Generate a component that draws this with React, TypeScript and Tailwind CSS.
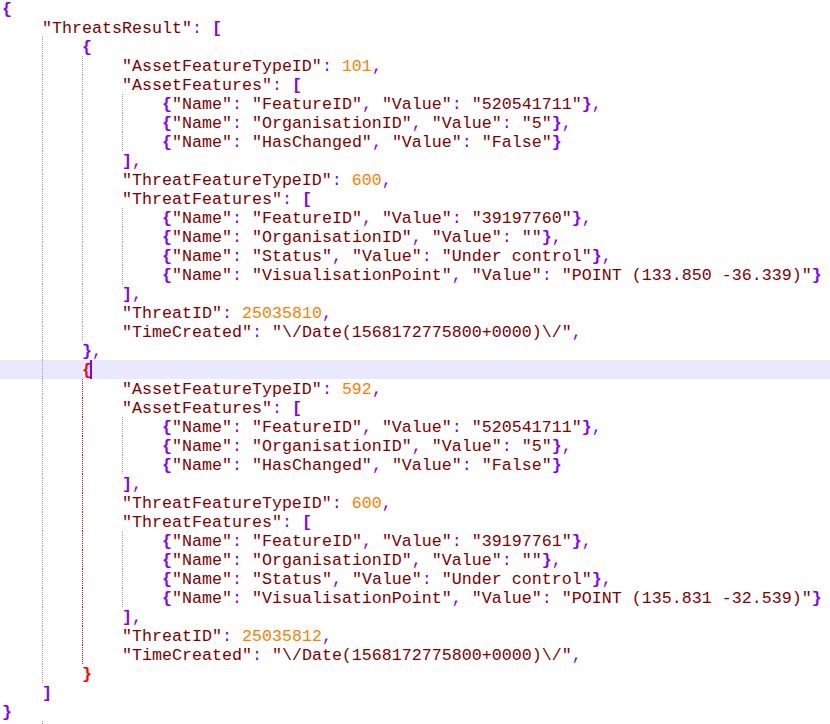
import React from "react";

type Line = { indent: number; text: string };

const L = (indent: number, text: string): Line => ({ indent, text });

const lines: Line[] = [
  L(0, "{"),
  L(1, '"ThreatsResult": ['),
  L(2, "{"),
  L(3, '"AssetFeatureTypeID": 101,'),
  L(3, '"AssetFeatures": ['),
  L(4, '{"Name": "FeatureID", "Value": "520541711"},'),
  L(4, '{"Name": "OrganisationID", "Value": "5"},'),
  L(4, '{"Name": "HasChanged", "Value": "False"}'),
  L(3, "],"),
  L(3, '"ThreatFeatureTypeID": 600,'),
  L(3, '"ThreatFeatures": ['),
  L(4, '{"Name": "FeatureID", "Value": "39197760"},'),
  L(4, '{"Name": "OrganisationID", "Value": ""},'),
  L(4, '{"Name": "Status", "Value": "Under control"},'),
  L(4, '{"Name": "VisualisationPoint", "Value": "POINT (133.850 -36.339)"}'),
  L(3, "],"),
  L(3, '"ThreatID": 25035810,'),
  L(3, '"TimeCreated": "\\/Date(1568172775800+0000)\\/",'),
  L(2, "},"),
  L(2, "{"),
  L(3, '"AssetFeatureTypeID": 592,'),
  L(3, '"AssetFeatures": ['),
  L(4, '{"Name": "FeatureID", "Value": "520541711"},'),
  L(4, '{"Name": "OrganisationID", "Value": "5"},'),
  L(4, '{"Name": "HasChanged", "Value": "False"}'),
  L(3, "],"),
  L(3, '"ThreatFeatureTypeID": 600,'),
  L(3, '"ThreatFeatures": ['),
  L(4, '{"Name": "FeatureID", "Value": "39197761"},'),
  L(4, '{"Name": "OrganisationID", "Value": ""},'),
  L(4, '{"Name": "Status", "Value": "Under control"},'),
  L(4, '{"Name": "VisualisationPoint", "Value": "POINT (135.831 -32.539)"}'),
  L(3, "],"),
  L(3, '"ThreatID": 25035812,'),
  L(3, '"TimeCreated": "\\/Date(1568172775800+0000)\\/",'),
  L(2, "}"),
  L(1, "]"),
  L(0, "}"),
  L(2, ""),
];

const CURRENT = 19;
const MATCH_OPEN = 19;
const MATCH_CLOSE = 35;

function tokens(text: string, matched: boolean) {
  const re = /("(?:[^"\\]|\\.)*")|(-?\d+(?:\.\d+)?)|([{}\[\]])|([:,])|(\s+)|(.)/g;
  const out: React.ReactNode[] = [];
  let m: RegExpExecArray | null;
  let i = 0;
  while ((m = re.exec(text))) {
    const k = i++;
    if (m[1]) out.push(<span key={k} className="text-[#800000]">{m[1]}</span>);
    else if (m[2]) out.push(<span key={k} className="text-[#ff8000]">{m[2]}</span>);
    else if (m[3]) {
      if (matched && (m[3] === "{" || m[3] === "}"))
        out.push(<span key={k} className="font-bold text-[#ff0000]">{m[3]}</span>);
      else out.push(<span key={k} className="font-bold text-[#8000ff]">{m[3]}</span>);
    } else if (m[4]) out.push(<span key={k} className="text-[#8000ff]">{m[4]}</span>);
    else out.push(<span key={k}>{m[0]}</span>);
  }
  return out;
}

const guideLeft = ["", "left-[42px]", "left-[82px]", "left-[122px]"];

export default function App() {
  return (
    <div className="h-[724px] w-[830px] overflow-hidden bg-white font-['Liberation_Mono','Courier_New',monospace] text-[16.667px] text-black">
      <div className="mt-[-1px]">
        {lines.map((ln, idx) => {
          const guides: number[] = [];
          for (let k = 1; k < ln.indent; k++) guides.push(k);
          const isLast = idx === lines.length - 1;
          const gList = isLast ? [1] : guides;
          const matched = idx === MATCH_OPEN || idx === MATCH_CLOSE;
          return (
            <div
              key={idx}
              className={`relative h-[19px] pl-[2px] leading-[19px] whitespace-pre ${idx === CURRENT ? "bg-[#e8e8ff]" : ""}`}
            >
              {gList.map((k) => {
                const red = k === 2 && idx > MATCH_OPEN && idx < MATCH_CLOSE;
                return (
                  <span
                    key={k}
                    className={`absolute top-0 bottom-0 ${guideLeft[k]} border-l border-dotted ${red ? "border-[#ff0000]" : "border-[#a0a0a0]"}`}
                  />
                );
              })}
              <span className="relative top-px">
                {" ".repeat(4 * ln.indent)}
                {tokens(ln.text, matched)}
              </span>
              {idx === CURRENT && (
                <span className="absolute top-0 bottom-0 left-[90px] w-[2px] bg-[#8000ff]" />
              )}
            </div>
          );
        })}
      </div>
    </div>
  );
}
